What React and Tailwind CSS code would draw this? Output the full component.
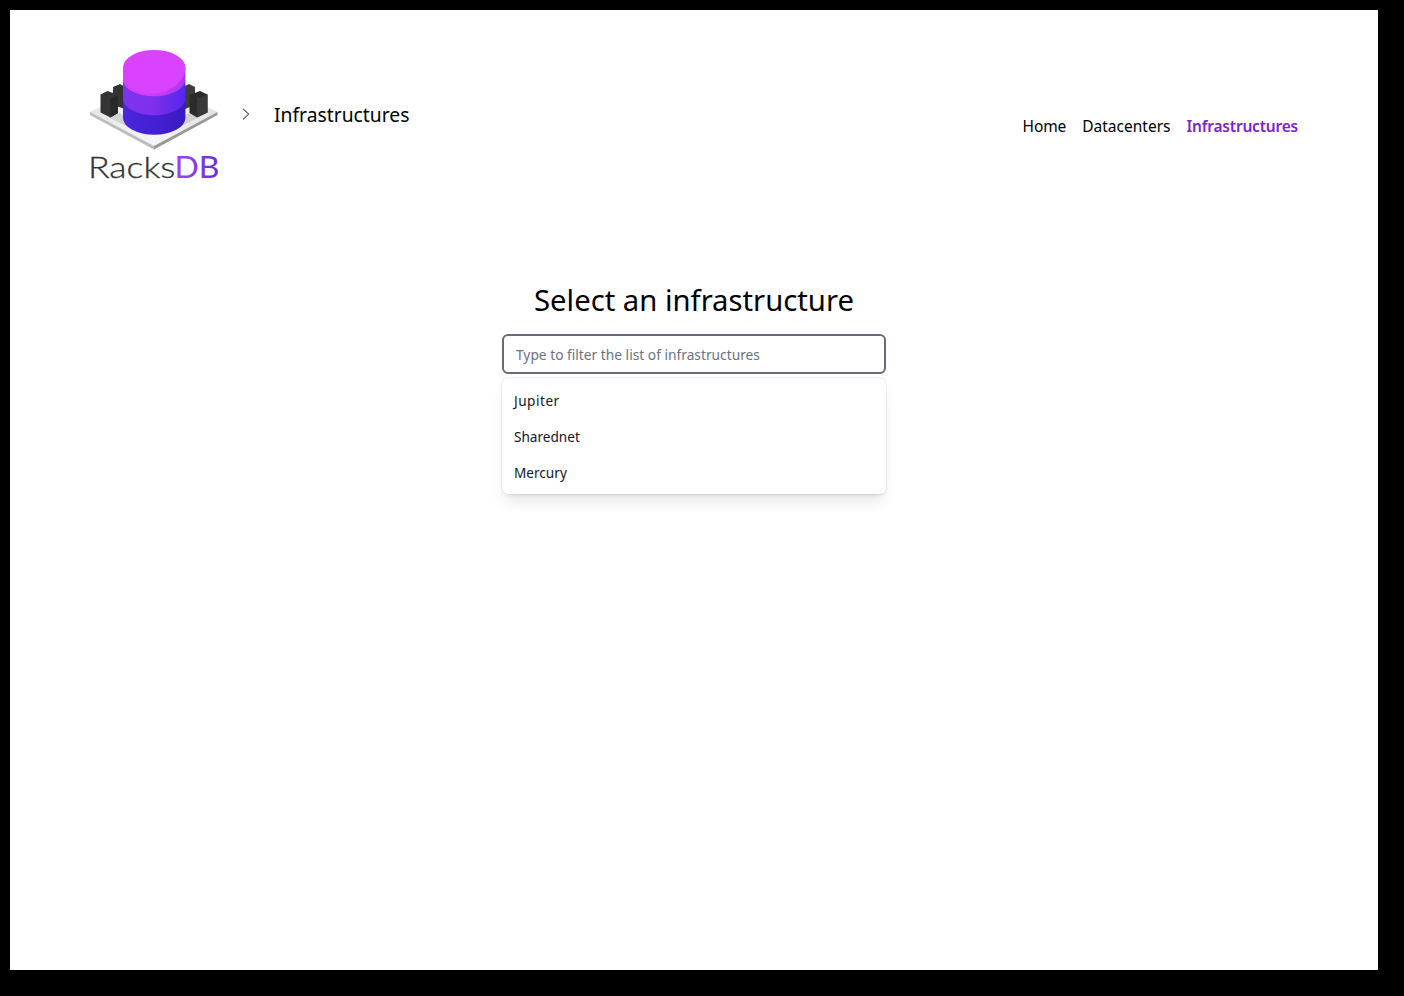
function Logo() {
  return (
    <svg className="h-[140px] w-[136px] overflow-visible" viewBox="90 50 136 140" aria-label="RacksDB">
      <defs>
        <linearGradient id="topSide" x1="0" x2="1">
          <stop offset="0" stopColor="#d942fd" />
          <stop offset="0.4" stopColor="#cf3ff5" />
          <stop offset="1" stopColor="#a838f0" />
        </linearGradient>
        <linearGradient id="midSide" x1="0" x2="1">
          <stop offset="0" stopColor="#7c34ee" />
          <stop offset="0.45" stopColor="#8030ec" />
          <stop offset="1" stopColor="#5526ee" />
        </linearGradient>
        <linearGradient id="lowSide" x1="0" x2="1">
          <stop offset="0" stopColor="#4a26dc" />
          <stop offset="0.5" stopColor="#4420d4" />
          <stop offset="1" stopColor="#3a1abe" />
        </linearGradient>
        <linearGradient id="plate" x1="0" x2="1">
          <stop offset="0" stopColor="#e6e6e6" />
          <stop offset="0.5" stopColor="#f5f5f5" />
          <stop offset="1" stopColor="#e2e2e2" />
        </linearGradient>
        <linearGradient id="db" x1="0" x2="1">
          <stop offset="0" stopColor="#a044f4" />
          <stop offset="1" stopColor="#6330dc" />
        </linearGradient>
      </defs>
      <path d="M90 112L154 80L217.500 112L154 146Z" fill="url(#plate)" />
      <path d="M90 112L154 146V149.500L90 115Z" fill="#bdbdbd" />
      <path d="M217.500 112L154 146V149.500L217.500 115Z" fill="#999999" />
      <path d="M110 118L119 113L129 118V126L124 125Z" fill="#d4d4d4" />
      <path d="M197 118L189 113L179 118V126L184 125Z" fill="#d0d0d0" />
      <path d="M113 87L120 84L125 87V109L113 105Z" fill="#343434" />
      <path d="M185 86L189 84L195 87V105L185 109Z" fill="#3c3c3c" />
      <path d="M100.500 94.500L107.500 91L118 95V113L110.500 117.500L100.500 112.500Z" fill="#343434" />
      <path d="M110.500 98.500L118 95V113L110.500 117.500Z" fill="#292929" />
      <path d="M189.500 95L200 91L207.500 94.500V112.500L197 117.500L189.500 113Z" fill="#2b2b2b" />
      <path d="M197 98.500L207.500 94.500V112.500L197 117.500Z" fill="#393939" />
      <path d="M123 98V118A31.200 16.800 0 0 0 185.400 118V98Z" fill="url(#lowSide)" />
      <path d="M123 80V98.500A31.200 16.800 0 0 0 185.400 98.500V80Z" fill="url(#midSide)" />
      <path d="M123 67V79.500A31.200 16.800 0 0 0 185.400 79.500V67Z" fill="url(#topSide)" />
      <path d="M123 67.500A31.200 17.500 0 0 1 185.400 67.500C185.400 81 172 91 155 94C139 93 123 88 123 78Z" fill="#d942ff" />
      <text x="88" y="177.500" fontSize="30" textLength="87.500" lengthAdjust="spacingAndGlyphs" fill="#333333" stroke="#333333" strokeWidth="0.3" className="font-['Lato'] font-light">Racks</text>
      <text x="174.500" y="177.500" fontSize="30" textLength="45" lengthAdjust="spacingAndGlyphs" fill="url(#db)" className="font-['Lato'] font-normal">DB</text>
    </svg>
  );
}

const infrastructures = ["Jupiter", "Sharednet", "Mercury"];

export default function App() {
  return (
    <div className="h-[996px] w-[1404px] bg-black pt-[10px] pl-[10px] font-['Noto_Sans',sans-serif] text-black">
      <div className="h-[960px] w-[1368px] bg-white px-20 pt-10">
        <header className="flex h-[132px] items-start justify-between">
          <div className="flex items-start">
            <Logo />
            <svg className="mt-[54px] ml-[10px] h-5 w-5" viewBox="0 0 20 20" fill="none" stroke="#555555" strokeWidth="1.1" strokeLinecap="round" strokeLinejoin="round">
              <path d="M7.300 5.200L12.700 10.200L7.300 15.200" />
            </svg>
            <span className="mt-[51px] ml-[18px] text-[19.300px] leading-7">Infrastructures</span>
          </div>
          <nav className="mt-16 flex gap-4 text-[15.500px] leading-6">
            <a className="tracking-[-0.1px]">Home</a>
            <a>Datacenters</a>
            <a className="font-semibold tracking-[-0.2px] text-[#7e22ce]">Infrastructures</a>
          </nav>
        </header>
        <main className="mx-auto mt-[100px] w-96">
          <h1 className="text-center text-[29.250px] leading-9">Select an infrastructure</h1>
          <div className="mt-4 h-10">
            <input
              className="block h-10 w-full rounded-md border-2 border-[#6b6880] bg-white pl-3 text-[13.750px] leading-5 text-gray-900 outline-none placeholder:text-gray-500"
              placeholder="Type to filter the list of infrastructures"
            />
          </div>
          <ul className="mt-1 rounded-md bg-white pt-[5px] pb-[3px] text-[13.600px] shadow-lg ring-1 ring-black/5">
            {infrastructures.map((name) => (
              <li key={name} className="px-3 py-2 leading-5 text-gray-900">
                <span className={name === "Jupiter" ? "tracking-[0.5px]" : ""}>{name}</span>
              </li>
            ))}
          </ul>
        </main>
      </div>
    </div>
  );
}
